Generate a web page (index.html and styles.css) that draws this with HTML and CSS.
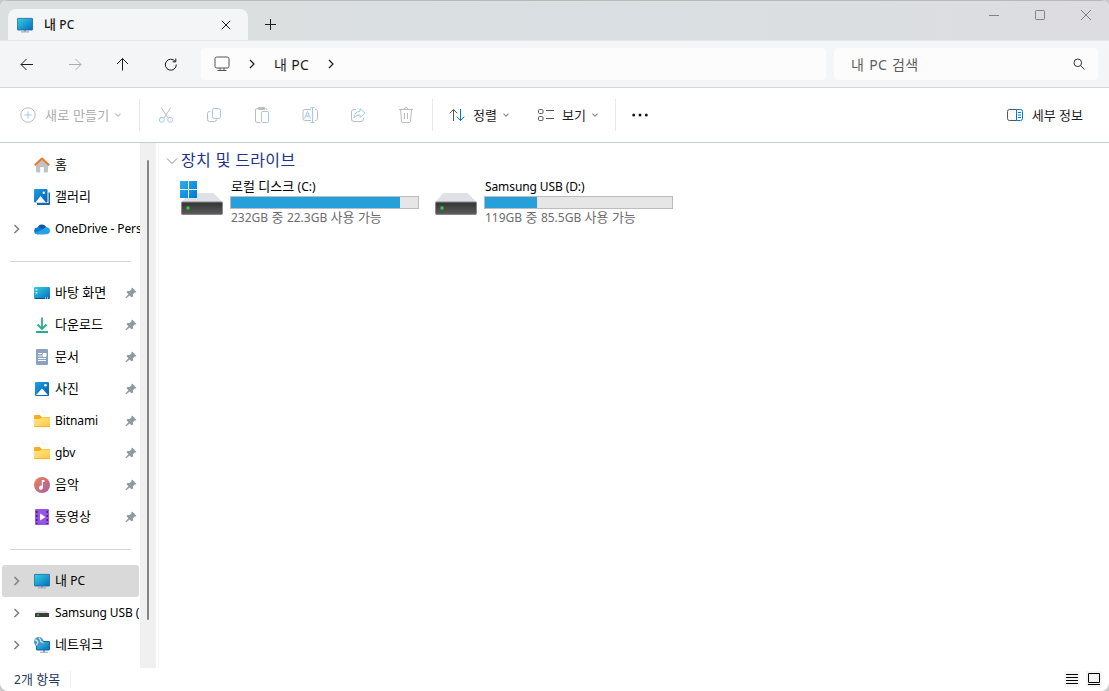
FILE: index.html
```
<!DOCTYPE html>
<html lang="ko">
<head>
    <meta charset="UTF-8">
    <meta name="viewport" content="width=device-width, initial-scale=1.0">
    <title>내 PC</title>
    <link rel="stylesheet" href="styles.css">
</head>
<body>
    <!-- Shared icons -->
    <svg class="defs" width="0" height="0">
        <defs>
            <linearGradient id="screen" x1="0" y1="0" x2="1" y2="1">
                <stop offset="0" stop-color="#30d3e5"/>
                <stop offset="1" stop-color="#0b69bd"/>
            </linearGradient>
            <linearGradient id="photo" x1="0" y1="0" x2="1" y2="1">
                <stop offset="0" stop-color="#1aa0e8"/>
                <stop offset="1" stop-color="#0b5cab"/>
            </linearGradient>
            <linearGradient id="folder-front" x1="0" y1="0" x2="1" y2="1">
                <stop offset="0" stop-color="#ffe695"/>
                <stop offset="1" stop-color="#fdc93c"/>
            </linearGradient>
            <linearGradient id="drive-front" x1="0" y1="0" x2="0" y2="1">
                <stop offset="0" stop-color="#333"/>
                <stop offset="1" stop-color="#5c5c5c"/>
            </linearGradient>
            <linearGradient id="win" x1="0" y1="0" x2="1" y2="1">
                <stop offset="0" stop-color="#2bb0ee"/>
                <stop offset="1" stop-color="#0078d4"/>
            </linearGradient>
            <symbol id="i-pc" viewBox="0 0 16 16">
                <path d="M7 12h2v3H7z" fill="#9fb3c0"/>
                <path d="M4 14.300h8v1.200H4z" fill="#a3adb5"/>
                <rect x=".4" y="1.400" width="15.200" height="11.600" rx=".6" fill="url(#screen)" stroke="#14649c" stroke-width=".8"/>
            </symbol>
            <symbol id="i-pin" viewBox="0 0 12 12">
                <path d="M7.300.600l4.100 4.100-.9.900-.7-.1-1.900 2 .1 2-1.200 1.100-2.100-2.200L1.300 11.200l-.8-.7 2.900-3.300-2-2.200 1.100-1.100 1.900.2 2.100-1.900-.1-.7z" fill="#8f9ba3"/>
            </symbol>
            <symbol id="i-folder" viewBox="0 0 16 16">
                <path d="M0 3.200C0 2.400.5 2 1.200 2h4.600L7.800 4H15c.6 0 1 .4 1 1v3H0z" fill="#f5b01a"/>
                <path d="M0 6h6.300l1.500-1.500H15c.6 0 1 .4 1 1V13c0 .6-.4 1-1 1H1c-.6 0-1-.4-1-1z" fill="url(#folder-front)"/>
                <path d="M.3 13.600h15.400" stroke="#e8a822" stroke-width=".8"/>
            </symbol>
            <symbol id="i-drive" viewBox="0 0 42 22">
                <path d="M8.500 0h24L42 9.500H0z" fill="#dfe1e6"/>
                <rect x=".5" y="9" width="41" height="12.500" rx="1" fill="url(#drive-front)" stroke="#86888b"/>
                <circle cx="7" cy="15" r="1.700" fill="#29d629"/>
            </symbol>
            <symbol id="i-down" viewBox="0 0 8 8">
                <path d="M1.500 2.700L4 5.200l2.500-2.500" fill="none" stroke="currentColor" stroke-width="1.200"/>
            </symbol>
            <symbol id="i-right" viewBox="0 0 8 10">
                <path d="M2 1l4 4-4 4" fill="none" stroke="currentColor" stroke-width="1.200"/>
            </symbol>
            <symbol id="i-right-bold" viewBox="0 0 8 10">
                <path d="M1.500 1l4 4-4 4" fill="none" stroke="currentColor" stroke-width="1.700"/>
            </symbol>
        </defs>
    </svg>

    <div class="window">
        <header class="titlebar">
            <div class="tab">
                <svg class="icon16"><use href="#i-pc"/></svg>
                <span class="tab-title">내 <span class="en">PC</span></span>
                <svg class="tab-close" viewBox="0 0 10 10"><path d="M.8.800l8.400 8.400M9.200.800L.800 9.200"/></svg>
            </div>
            <svg class="new-tab" viewBox="0 0 11 11"><path d="M5.500 0v11M0 5.500h11"/></svg>
            <div class="window-buttons">
                <svg viewBox="0 0 12 12"><path d="M1 6.500h10"/></svg>
                <svg viewBox="0 0 12 12"><rect x="1.500" y="1.500" width="9" height="9" rx=".8"/></svg>
                <svg viewBox="0 0 12 12"><path d="M1 1l10 10M11 1L1 11"/></svg>
            </div>
        </header>

        <nav class="navbar">
            <div class="nav-buttons">
                <svg viewBox="0 0 16 16"><path d="M14 8.500H2M7.500 3L2 8.500 7.500 14"/></svg>
                <svg class="off" viewBox="0 0 16 16"><path d="M2 8.500h12M8.500 3L14 8.500 8.500 14"/></svg>
                <svg viewBox="0 0 16 16"><path d="M7.500 14.500V2.500M2 8l5.500-5.500L13 8"/></svg>
                <svg viewBox="0 0 16 16"><path d="M12.200 5.400A5.500 5.500 0 1 0 13.300 8.500M12.800 2.500v3.300h-3.300"/></svg>
            </div>
            <div class="address">
                <svg class="address-pc" viewBox="0 0 16 16"><rect x="1" y="1" width="14" height="11" rx="1.800"/><path d="M6 12v2.500M10 12v2.500M3.500 14.500h9"/></svg>
                <svg class="chevron"><use href="#i-right"/></svg>
                <span>내 <span class="en">PC</span></span>
                <svg class="chevron"><use href="#i-right"/></svg>
            </div>
            <div class="search">
                <span>내 <span class="en">PC</span> 검색</span>
                <svg viewBox="0 0 12 12"><circle cx="4.800" cy="4.800" r="3.800"/><path d="M7.600 7.600l3.900 3.900"/></svg>
            </div>
        </nav>

        <div class="toolbar">
            <div class="tool tool-new off">
                <svg class="icon16" viewBox="0 0 16 16"><circle cx="8" cy="8" r="7.200"/><path class="blue" d="M8 4.500v7M4.500 8h7"/></svg>
                <span>새로 만들기</span>
                <svg class="caret"><use href="#i-down"/></svg>
            </div>
            <div class="tool-icons off">
                <svg viewBox="0 0 16 16"><path d="M3.200.500l6.800 10.500M12.800.500L6 11"/><circle class="blue" cx="3.800" cy="12.800" r="2.500"/><circle class="blue" cx="12.200" cy="12.800" r="2.500"/></svg>
                <svg viewBox="0 0 16 16"><path d="M4.500 4.500H3.500a2 2 0 0 0-2 2v6a2 2 0 0 0 2 2h5a2 2 0 0 0 2-2"/><rect class="blue" x="6.500" y="1.500" width="8" height="10" rx="1.800"/></svg>
                <svg viewBox="0 0 16 16"><path d="M6.500 15.500H3a1.500 1.500 0 0 1-1.500-1.500V3a1.500 1.500 0 0 1 1.500-1.500h8.500A1.500 1.500 0 0 1 13 3M4.500.5h6v2h-6z"/><rect class="blue" x="7.500" y="4.500" width="7" height="11" rx="1"/></svg>
                <svg viewBox="0 0 16 16"><path d="M9 13.500H3a2 2 0 0 1-2-2v-7a2 2 0 0 1 2-2h6M13 2.500a2 2 0 0 1 2.500 2v7a2 2 0 0 1-2.500 2"/><path class="blue" d="M10.500 1v14M8.500.500h4M8.500 15.500h4M2.500 11.500l3-7 3 7M3.700 9.200h3.600"/></svg>
                <svg viewBox="0 0 16 16"><path d="M6 2.500H4a2.500 2.500 0 0 0-2.500 2.500v7A2.500 2.500 0 0 0 4 14.500h7a2.500 2.500 0 0 0 2.500-2.500v-1"/><path class="blue" d="M10 1.500L15 6l-5 4.500V8C7 8 5.500 9 4 11c.3-4 2.500-6.500 6-6.800z"/></svg>
                <svg viewBox="0 0 16 16"><path d="M1 2.500h14M2.500 2.500l1 11.300a1.500 1.500 0 0 0 1.500 1.700h6a1.500 1.500 0 0 0 1.500-1.700l1-11.300M6 2.500a2 2 0 0 1 4 0M6.500 6v6M9.500 6v6"/></svg>
            </div>
            <div class="tool-menus">
                <div class="tool">
                    <svg class="icon16" viewBox="0 0 16 16"><path d="M4.500 14V2.500M.700 6.300l3.800-3.800 3.800 3.800"/><path class="blue" d="M11.500 2v11.500M7.700 9.700l3.800 3.800 3.800-3.800"/></svg>
                    <span>정렬</span>
                    <svg class="caret"><use href="#i-down"/></svg>
                </div>
                <div class="tool">
                    <svg class="icon16" viewBox="0 0 16 16"><rect x=".500" y="2.500" width="4.500" height="4" rx="1.200"/><rect x=".500" y="9.500" width="4.500" height="4" rx="1.200"/><path d="M8 3.500h8M8 11.500h8"/></svg>
                    <span>보기</span>
                    <svg class="caret"><use href="#i-down"/></svg>
                </div>
            </div>
            <svg class="more" viewBox="0 0 16 4"><circle cx="1.700" cy="2" r="1.500"/><circle cx="8" cy="2" r="1.500"/><circle cx="14.300" cy="2" r="1.500"/></svg>
            <div class="tool tool-details">
                <svg class="icon16" viewBox="0 0 16 16"><path d="M9.500 2.500h-7a2 2 0 0 0-2 2v7a2 2 0 0 0 2 2h7"/><path class="blue" d="M9.500 2.500h4a2 2 0 0 1 2 2v7a2 2 0 0 1-2 2h-4zM11 5.500h3M11 8h3M11 10.500h3"/></svg>
                <span>세부 정보</span>
            </div>
        </div>

        <div class="content">
            <aside class="sidebar">
                <div class="item">
                    <svg class="icon16" viewBox="0 0 16 16"><path d="M2 7l6-5.500L14 7v7.500a1 1 0 0 1-1 1H9.800V10H6.200v5.500H3a1 1 0 0 1-1-1z" fill="#c2c3c6"/><path d="M.800 8.300L8 1.500l7.200 6.800" fill="none" stroke="#e87a28" stroke-width="2" stroke-linejoin="round"/></svg>
                    <span>홈</span>
                </div>
                <div class="item">
                    <svg class="icon16" viewBox="0 0 16 16"><path d="M3 14h11.500V3.500H16V15a1 1 0 0 1-1 1H3z" fill="#1668b4"/><rect width="13.500" height="13.500" rx="1" fill="url(#photo)"/><path d="M1.500 13.500l5-6.500 5.500 6.500z" fill="#fff"/><circle cx="9.800" cy="3.700" r="1.200" fill="#fff"/></svg>
                    <span>갤러리</span>
                </div>
                <div class="item">
                    <svg class="chevron"><use href="#i-right-bold"/></svg>
                    <svg class="icon16" viewBox="0 0 16 16"><path d="M3.600 7A4.600 4.600 0 0 1 12.300 6.200L8 9z" fill="#0c59a4"/><path d="M3.500 13.300A3.400 3.400 0 0 1 3.600 6.500C5.500 6 7 7 8.500 8l4 3-2 2.300z" fill="#0f78d4"/><path d="M8 8.800l4.300-2.800c2.300.2 3.700 1.700 3.700 3.700 0 2.100-1.500 3.600-3.500 3.600H3.500c-1 0-2-.5-2.600-1.300z" fill="#24a0ea"/></svg>
                    <span class="en narrow">OneDrive - Pers</span>
                </div>
                <hr>
                <div class="item">
                    <svg class="icon16" viewBox="0 0 16 16"><rect y="2" width="16" height="12" rx="1" fill="url(#screen)"/><path d="M1.700 4h1.600v1.600H1.700zM1.700 7h1.600v1.600H1.700z" fill="#fff"/><path d="M1 13.500h14" stroke="#124d84"/><path d="M11 13h1M13 13h1" stroke="#fff"/></svg>
                    <span>바탕 화면</span>
                    <svg class="pin"><use href="#i-pin"/></svg>
                </div>
                <div class="item">
                    <svg class="icon16" viewBox="0 0 16 16"><path d="M8 .500v11M3.500 7.500L8 12l4.500-4.500" fill="none" stroke="#25b08b" stroke-width="1.800"/><path d="M2 15h12" stroke="#18a184" stroke-width="1.800"/></svg>
                    <span>다운로드</span>
                    <svg class="pin"><use href="#i-pin"/></svg>
                </div>
                <div class="item">
                    <svg class="icon16" viewBox="0 0 16 16"><rect x="2" width="12" height="16" rx="1" fill="#8aa2c0"/><path d="M4 4.500h4M4 7h4M4 9.500h8M4 11.500h8M9 4.500h3v3H9z" fill="#fff" stroke="#fff"/></svg>
                    <span>문서</span>
                    <svg class="pin"><use href="#i-pin"/></svg>
                </div>
                <div class="item">
                    <svg class="icon16" viewBox="0 0 16 16"><rect x="1" y="1" width="14" height="14" rx="1" fill="url(#photo)"/><path d="M2 14l6-6.500L14 14z" fill="#fff"/><circle cx="11.500" cy="4.200" r="1.300" fill="#fff"/></svg>
                    <span>사진</span>
                    <svg class="pin"><use href="#i-pin"/></svg>
                </div>
                <div class="item">
                    <svg class="icon16"><use href="#i-folder"/></svg>
                    <span class="en narrow">Bitnami</span>
                    <svg class="pin"><use href="#i-pin"/></svg>
                </div>
                <div class="item">
                    <svg class="icon16"><use href="#i-folder"/></svg>
                    <span class="en narrow">gbv</span>
                    <svg class="pin"><use href="#i-pin"/></svg>
                </div>
                <div class="item">
                    <svg class="icon16" viewBox="0 0 16 16"><defs><linearGradient id="music" x1="0" y1="0" x2="1" y2="1"><stop offset="0" stop-color="#ef8354"/><stop offset="1" stop-color="#ab5aa5"/></linearGradient></defs><circle cx="8" cy="8" r="8" fill="url(#music)"/><path d="M7.800 3h2.700v2H9v5.500a2 2 0 1 1-1.200-1.700z" fill="#fff"/></svg>
                    <span>음악</span>
                    <svg class="pin"><use href="#i-pin"/></svg>
                </div>
                <div class="item">
                    <svg class="icon16" viewBox="0 0 16 16"><rect x="1" width="14" height="16" rx="1" fill="#9754e3"/><path d="M2.800 2v13M13.200 2v13" stroke="#4a1d90" stroke-width="1.600" stroke-dasharray="2 2"/><path d="M6 4.500v7L11.500 8z" fill="#fff"/></svg>
                    <span>동영상</span>
                    <svg class="pin"><use href="#i-pin"/></svg>
                </div>
                <hr>
                <div class="item selected">
                    <svg class="chevron"><use href="#i-right-bold"/></svg>
                    <svg class="icon16"><use href="#i-pc"/></svg>
                    <span>내 <span class="en">PC</span></span>
                </div>
                <div class="item">
                    <svg class="chevron"><use href="#i-right-bold"/></svg>
                    <svg class="icon16" viewBox="0 0 16 16"><path d="M3.500 6h9L15 8.500H1z" fill="#d8dadd"/><rect x="1" y="8" width="14" height="4" rx=".5" fill="#3d3d3d"/><path d="M3 10h2" stroke="#3bc83b" stroke-width="1.400"/></svg>
                    <span class="en narrow">Samsung USB (</span>
                </div>
                <div class="item">
                    <svg class="chevron"><use href="#i-right-bold"/></svg>
                    <svg class="icon16" viewBox="0 0 16 16"><path d="M9 13h2v2H9zM6 14.700h8v1H6z" fill="#8fa9ba"/><rect x="2.500" y="4.500" width="13" height="8.500" rx=".5" fill="url(#screen)" stroke="#14649c"/><circle cx="4.800" cy="4.800" r="4.800" fill="#4b95c2"/><path d="M1 3c2 .3 3 1 2.800 2.500S2.500 7 2.500 8.500M5 .500c0 1.500 2 1.500 1.500 3s2 1 2.500 2.500" fill="none" stroke="#c8e5ef" stroke-width="1.300"/></svg>
                    <span>네트워크</span>
                </div>
            </aside>
            <div class="scrollbar"><div class="thumb"></div></div>

            <main class="files">
                <h2>
                    <svg viewBox="0 0 12 12"><path d="M1 3.500l5 5 5-5"/></svg>
                    <span>장치 및 드라이브</span>
                </h2>
                <div class="drives">
                    <div class="drive">
                        <div class="drive-icon">
                            <svg class="disk"><use href="#i-drive"/></svg>
                            <svg class="winlogo" viewBox="0 0 17 17"><path d="M0 0h8v8H0zM9 0h8v8H9zM0 9h8v8H0zM9 9h8v8H9z" fill="url(#win)"/></svg>
                        </div>
                        <div class="drive-info">
                            <div class="drive-name">로컬 디스크 <span class="en">(C:)</span></div>
                            <div class="bar"><div class="used" style="width: 90.4%"></div></div>
                            <div class="drive-free"><span class="en">232GB</span> 중 <span class="en">22.3GB</span> 사용 가능</div>
                        </div>
                    </div>
                    <div class="drive">
                        <div class="drive-icon">
                            <svg class="disk"><use href="#i-drive"/></svg>
                        </div>
                        <div class="drive-info">
                            <div class="drive-name"><span class="en narrow">Samsung USB (D:)</span></div>
                            <div class="bar"><div class="used" style="width: 27.9%"></div></div>
                            <div class="drive-free"><span class="en">119GB</span> 중 <span class="en">85.5GB</span> 사용 가능</div>
                        </div>
                    </div>
                </div>
            </main>
        </div>

        <footer class="statusbar">
            <span class="count"><span class="en">2</span>개 항목</span>
            <div class="view-buttons">
                <svg viewBox="0 0 16 16"><path d="M2 3.500h12M2 6.500h12M2 9.500h12M2 12.500h12"/></svg>
                <svg viewBox="0 0 16 16"><path d="M2.500 2.500h11v9h-11zM2 13.500h12"/></svg>
            </div>
        </footer>
    </div>
</body>
</html>
```
FILE: styles.css
```
:root {
    --blue: #0078d4;
    --text: #1b1b1b;
    --gray: #6d6d6d;
    --line: #d5d7d9;
}

* {
    box-sizing: border-box;
    margin: 0;
    padding: 0;
}

body {
    background-color: #c9c9c9;
    color: var(--text);
    font-family: 'Noto Sans', 'Noto Sans CJK KR', sans-serif;
    font-size: 13px;
    line-height: 16px;
    overflow: hidden;
}

svg {
    display: block;
    flex: none;
    fill: none;
    stroke: currentColor;
}

symbol, use, .item svg, .drive-icon svg {
    stroke: none;
}

.defs {
    position: absolute;
}

.icon16 {
    width: 16px;
    height: 16px;
}

.en {
    font-size: 12px;
}

.narrow {
    letter-spacing: -0.1px;
}

.window {
    width: 1109px;
    height: 691px;
    display: flex;
    flex-direction: column;
    background-color: #fff;
    border-radius: 8px;
    overflow: hidden;
}

/* Title bar */
.titlebar {
    height: 40px;
    display: flex;
    align-items: flex-end;
    padding-left: 8px;
    background: linear-gradient(90deg, #dcdfdf, #d9dfe2 55%, #dbdee1 80%, #dddce0);
    border-top: 1px solid #b9b9b9;
}

.tab {
    width: 240px;
    height: 31px;
    display: flex;
    align-items: center;
    padding: 0 17px 0 9px;
    background-color: #f3f5f7;
    border-radius: 8px 8px 0 0;
}

.tab-title {
    margin-left: 11px;
    font-weight: 500;
}

.tab-close {
    width: 10px;
    height: 10px;
    margin-left: auto;
}

.new-tab {
    width: 11px;
    height: 11px;
    margin: 0 0 10px 17px;
}

.window-buttons {
    display: flex;
    gap: 34px;
    align-self: flex-start;
    margin: 8px 17px 0 auto;
    color: #808285;
}

.window-buttons svg {
    width: 12px;
    height: 12px;
}

/* Address row */
.navbar {
    height: 48px;
    display: flex;
    align-items: center;
    padding-right: 11px;
    background-color: #f3f5f7;
    border-top: 1px solid #e6e9eb;
    border-bottom: 1px solid var(--line);
    font-size: 14px;
}

.navbar .en {
    font-size: 14px;
}

.navbar span {
    padding-top: 1px;
    letter-spacing: 0.3px;
}

.nav-buttons {
    width: 201px;
    display: flex;
    gap: 32px;
    padding-left: 19px;
}

.nav-buttons svg {
    width: 16px;
    height: 16px;
}

.nav-buttons .off {
    color: #ababab;
}

.address, .search {
    height: 32px;
    display: flex;
    align-items: center;
    background-color: #fcfcfc;
    border-radius: 4px;
}

.address {
    width: 625px;
    padding-left: 13px;
}

.address-pc {
    width: 16px;
    height: 16px;
    color: #555;
}

.chevron {
    width: 8px;
    height: 10px;
}

.address .chevron {
    margin: 0 18px;
}

.search {
    width: 264px;
    margin-left: 8px;
    padding: 0 13px 0 17px;
    justify-content: space-between;
    color: #5d5d5d;
}

.search span {
    word-spacing: 1px;
}

.search svg {
    width: 12px;
    height: 12px;
    color: #333;
}

/* Command bar */
.toolbar {
    height: 55px;
    display: flex;
    align-items: center;
    padding-left: 20px;
    border-bottom: 1px solid #c5ced3;
}

.tool {
    display: flex;
    align-items: center;
    gap: 8px;
}

.tool .icon16, .tool-icons {
    color: #555;
}

.tool .blue, .tool-icons .blue {
    stroke: var(--blue);
}

.toolbar .off {
    color: #ababab;
}

.toolbar .off svg {
    color: #bcbcbc;
}

.toolbar .off .blue {
    stroke: #9dccf0;
}

.tool-new {
    width: 119px;
}

.tool-new span {
    margin-left: 1px;
    letter-spacing: 0.2px;
}

.tool .caret {
    width: 8px;
    height: 8px;
    color: #8a8a8a;
    margin-left: -3px;
}

.tool-icons {
    width: 294px;
    height: 32px;
    display: flex;
    align-items: center;
    gap: 32px;
    padding-left: 18px;
    border-left: 1px solid #e8e8e8;
    border-right: 1px solid #e8e8e8;
}

.tool-icons svg {
    width: 16px;
    height: 16px;
}

.tool-menus {
    width: 183px;
    height: 32px;
    display: flex;
    align-items: center;
    gap: 28px;
    padding-left: 16px;
    border-right: 1px solid #e8e8e8;
}

.more {
    width: 16px;
    height: 4px;
    margin-left: 16px;
    fill: currentColor;
    stroke: none;
}

.tool-details {
    margin: 0 26px 0 auto;
}

.tool-details .icon16 {
    margin-right: 1px;
}

/* Body */
.content {
    height: 525px;
    display: flex;
}

.sidebar {
    width: 140px;
    padding: 6px 1px 0 2px;
    color: #000;
}

.item {
    height: 32px;
    display: flex;
    align-items: center;
    padding-left: 32px;
    white-space: nowrap;
    border-radius: 3px;
}

.item > span:not(.narrow) {
    padding-bottom: 2px;
}

.item.selected {
    background-color: #d9d9d9;
}

.item .chevron {
    margin: 0 13px 0 -21px;
    color: #858585;
}

.item .icon16 {
    margin-right: 5px;
}

.item .pin {
    width: 12px;
    height: 12px;
    margin: 0 2px 0 auto;
}

.sidebar hr {
    height: 1px;
    margin: 16px 8px 15px;
    border: none;
    background-color: #d4d4d4;
}

.scrollbar {
    width: 16px;
    padding: 17px 0 0 7px;
    background-color: #f0f0f0;
}

.thumb {
    width: 2px;
    height: 460px;
    background-color: #858585;
    border-radius: 1px;
}

.files {
    flex: 1;
    margin-left: 2px;
    padding: 9px 0 0 7px;
    border-left: 1px solid #f8f8f8;
}

.files h2 {
    display: flex;
    align-items: center;
    gap: 3px;
    height: 18px;
    font-size: 16px;
    font-weight: 400;
    letter-spacing: 0.35px;
    color: #1e3287;
}

.files h2 span {
    padding-bottom: 2px;
}

.files h2 svg {
    width: 12px;
    height: 12px;
    color: #8a8a8a;
}

.drives {
    display: flex;
    padding: 8px 0 0 14px;
}

.drive {
    width: 254px;
    display: flex;
}

.drive-icon {
    width: 50px;
    position: relative;
    padding: 15px 0 0 1px;
}

.disk {
    width: 42px;
    height: 22px;
}

.winlogo {
    position: absolute;
    top: 3px;
    left: 0;
    width: 17px;
    height: 17px;
}

.drive-name {
    height: 18px;
    padding-left: 1px;
    color: #000;
}

.bar {
    width: 189px;
    height: 13px;
    background-color: #e6e6e6;
    border: 1px solid #bcbcbc;
}

.used {
    height: 100%;
    background-color: #26a0da;
}

.drive-free {
    padding-left: 1px;
    color: var(--gray);
}

/* Status bar */
.statusbar {
    height: 23px;
    display: flex;
    align-items: center;
    justify-content: space-between;
    padding: 0 7px 1px 14px;
    color: #1f3a56;
}

.count {
    padding-right: 10px;
    border-right: 1px solid #eee;
}

.view-buttons {
    display: flex;
    gap: 6px;
    color: #000;
}

.view-buttons svg {
    width: 16px;
    height: 16px;
    background-color: #f5f5f5;
}
```
